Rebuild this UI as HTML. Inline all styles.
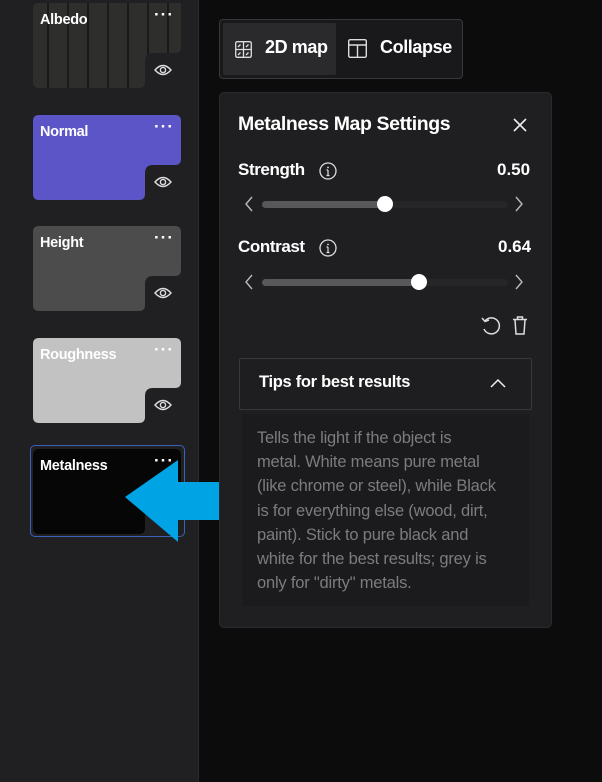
<!DOCTYPE html>
<html><head><style>
*{margin:0;padding:0;box-sizing:border-box}
body{width:602px;height:782px;background:#0c0c0d;font-family:"Liberation Sans",sans-serif;position:relative;overflow:hidden;color:#fff}
.side{position:absolute;left:0;top:0;width:199px;height:782px;background:#202023;border-right:1px solid #2a2a2d}
.card{position:absolute;left:33px;width:148px;height:85px}
.card svg{position:absolute;left:0;top:0}
.card .t{position:absolute;left:7px;top:9px;font-size:14.5px;font-weight:bold;letter-spacing:-0.3px}
.card .d{position:absolute;right:7px;top:2px;font-size:17px;font-weight:bold;letter-spacing:1px}
.card .e{position:absolute;left:121px;top:60px}
.abs{position:absolute}
.b{font-weight:bold}
</style></head><body>
<div class="side"></div>

<div class="card" style="top:3px">
<svg width="148" height="85"><defs><pattern id="st" width="20" height="85" patternUnits="userSpaceOnUse"><rect width="20" height="85" fill="#2e2e2c"/><rect x="14" width="2" height="85" fill="#1a1a19"/></pattern></defs><path d="M6 0H148V44Q148 50 142 50H120Q112 50 112 58V79Q112 85 106 85H6Q0 85 0 79V6Q0 0 6 0Z" fill="url(#st)"/></svg>
<div class="t">Albedo</div><div class="d">···</div>
<svg class="e" width="18" height="14" viewBox="0 0 18 14"><path d="M1 7Q9 -2 17 7Q9 16 1 7Z" fill="none" stroke="#ddd" stroke-width="1.4"/><circle cx="9" cy="7" r="2.6" fill="none" stroke="#ddd" stroke-width="1.4"/></svg>
</div>
<div class="card" style="top:115px">
<svg width="148" height="85"><path d="M6 0H142Q148 0 148 6V44Q148 50 142 50H120Q112 50 112 58V79Q112 85 106 85H6Q0 85 0 79V6Q0 0 6 0Z" fill="#5c55c7"/></svg>
<div class="t">Normal</div><div class="d">···</div>
<svg class="e" width="18" height="14" viewBox="0 0 18 14"><path d="M1 7Q9 -2 17 7Q9 16 1 7Z" fill="none" stroke="#ddd" stroke-width="1.4"/><circle cx="9" cy="7" r="2.6" fill="none" stroke="#ddd" stroke-width="1.4"/></svg>
</div>
<div class="card" style="top:226px">
<svg width="148" height="85"><path d="M6 0H142Q148 0 148 6V44Q148 50 142 50H120Q112 50 112 58V79Q112 85 106 85H6Q0 85 0 79V6Q0 0 6 0Z" fill="#4c4c4c"/></svg>
<div class="t">Height</div><div class="d">···</div>
<svg class="e" width="18" height="14" viewBox="0 0 18 14"><path d="M1 7Q9 -2 17 7Q9 16 1 7Z" fill="none" stroke="#ddd" stroke-width="1.4"/><circle cx="9" cy="7" r="2.6" fill="none" stroke="#ddd" stroke-width="1.4"/></svg>
</div>
<div class="card" style="top:338px">
<svg width="148" height="85"><path d="M6 0H142Q148 0 148 6V44Q148 50 142 50H120Q112 50 112 58V79Q112 85 106 85H6Q0 85 0 79V6Q0 0 6 0Z" fill="#c2c2c2"/></svg>
<div class="t">Roughness</div><div class="d">···</div>
<svg class="e" width="18" height="14" viewBox="0 0 18 14"><path d="M1 7Q9 -2 17 7Q9 16 1 7Z" fill="none" stroke="#ddd" stroke-width="1.4"/><circle cx="9" cy="7" r="2.6" fill="none" stroke="#ddd" stroke-width="1.4"/></svg>
</div>
<div class="abs" style="left:30px;top:445px;width:155px;height:92px;border:1.5px solid #3a62b8;border-radius:5px"></div>
<div class="card" style="top:449px">
<svg width="148" height="85"><path d="M6 0H142Q148 0 148 6V44Q148 50 142 50H120Q112 50 112 58V79Q112 85 106 85H6Q0 85 0 79V6Q0 0 6 0Z" fill="#060606"/></svg>
<div class="t">Metalness</div><div class="d">···</div>
</div>

<svg class="abs" style="left:120px;top:455px" width="125" height="90"><path d="M5 42L58 5V27H118V65H58V87Z" fill="#00a3e3"/></svg>

<div class="abs" style="left:219px;top:19px;width:244px;height:60px;background:#19191b;border:1px solid #38383a;border-radius:4px"></div>
<div class="abs" style="left:223px;top:23px;width:113px;height:52px;background:#2a2a2c;border-radius:2px"></div>
<svg class="abs" style="left:235px;top:41px" width="17" height="17" viewBox="0 0 17 17" fill="none" stroke="#ddd" stroke-width="1.3"><rect x="0.7" y="0.7" width="15.6" height="15.6" rx="1.5"/><path d="M8.5 1V16M1 8.5H16M3 6L5.5 3.5M11 6L13.5 3.5M3 14L5.5 11.5M11 14L13.5 11.5"/></svg>
<div class="abs b" style="left:265px;top:37px;font-size:18px;letter-spacing:-0.4px">2D map</div>
<svg class="abs" style="left:348px;top:39px" width="19" height="19" viewBox="0 0 19 19" fill="none" stroke="#ddd" stroke-width="1.4"><rect x="0.7" y="0.7" width="17.6" height="17.6" rx="1.5"/><path d="M1 6H18M9.5 6V18"/></svg>
<div class="abs b" style="left:380px;top:37px;font-size:18px;letter-spacing:-0.4px">Collapse</div>

<div class="abs" style="left:219px;top:92px;width:333px;height:536px;background:#1f1f21;border:1px solid #2a2a2c;border-radius:5px"></div>
<div class="abs b" style="left:238px;top:113px;font-size:19.5px;letter-spacing:-0.4px">Metalness Map Settings</div>
<svg class="abs" style="left:513px;top:118px" width="14" height="14"><path d="M1 1L13 13M13 1L1 13" stroke="#eee" stroke-width="1.6"/></svg>

<div class="abs b" style="left:238px;top:160px;font-size:17px;letter-spacing:-0.4px">Strength</div>
<svg class="abs" style="left:319px;top:162px" width="18" height="18"><circle cx="9" cy="9" r="8" fill="none" stroke="#ddd" stroke-width="1.3"/><path d="M9 8V13.5M7.5 8H9M7.5 13.5H10.5" stroke="#ddd" stroke-width="1.2"/><circle cx="9" cy="5.5" r="0.9" fill="#ddd"/></svg>
<div class="abs b" style="left:497px;top:160px;font-size:17px">0.50</div>
<svg class="abs" style="left:244px;top:196px" width="10" height="16"><path d="M8 1L2 8L8 15" fill="none" stroke="#bbb" stroke-width="1.4"/></svg>
<div class="abs" style="left:262px;top:201px;width:246px;height:7px;background:#262628;border-radius:4px"></div>
<div class="abs" style="left:262px;top:201px;width:123px;height:7px;background:#58585a;border-radius:4px"></div>
<div class="abs" style="left:377px;top:196px;width:16px;height:16px;background:#fff;border-radius:50%"></div>
<svg class="abs" style="left:514px;top:196px" width="10" height="16"><path d="M2 1L8 8L2 15" fill="none" stroke="#bbb" stroke-width="1.4"/></svg>

<div class="abs b" style="left:238px;top:237px;font-size:17px;letter-spacing:-0.4px">Contrast</div>
<svg class="abs" style="left:319px;top:239px" width="18" height="18"><circle cx="9" cy="9" r="8" fill="none" stroke="#ddd" stroke-width="1.3"/><path d="M9 8V13.5M7.5 8H9M7.5 13.5H10.5" stroke="#ddd" stroke-width="1.2"/><circle cx="9" cy="5.5" r="0.9" fill="#ddd"/></svg>
<div class="abs b" style="left:498px;top:237px;font-size:17px">0.64</div>
<svg class="abs" style="left:244px;top:274px" width="10" height="16"><path d="M8 1L2 8L8 15" fill="none" stroke="#bbb" stroke-width="1.4"/></svg>
<div class="abs" style="left:262px;top:279px;width:246px;height:7px;background:#262628;border-radius:4px"></div>
<div class="abs" style="left:262px;top:279px;width:157px;height:7px;background:#58585a;border-radius:4px"></div>
<div class="abs" style="left:411px;top:274px;width:16px;height:16px;background:#fff;border-radius:50%"></div>
<svg class="abs" style="left:514px;top:274px" width="10" height="16"><path d="M2 1L8 8L2 15" fill="none" stroke="#bbb" stroke-width="1.4"/></svg>

<svg class="abs" style="left:480px;top:315px" width="22" height="22" viewBox="0 0 22 22" fill="none" stroke="#ddd" stroke-width="1.5"><path d="M5 6A8 8 0 1 1 4 14"/><path d="M2 3L5 6.5L9 5"/></svg>
<svg class="abs" style="left:512px;top:316px" width="16" height="19" viewBox="0 0 16 19" fill="none" stroke="#ddd" stroke-width="1.5"><path d="M1 3.5H15M5.5 3.5V1H10.5V3.5M3 3.5L4 18H12L13 3.5"/></svg>

<div class="abs" style="left:239px;top:358px;width:293px;height:52px;border:1px solid #38383a;border-radius:2px;background:#1e1e20"></div>
<div class="abs b" style="left:259px;top:373px;font-size:16.5px;letter-spacing:-0.3px">Tips for best results</div>
<svg class="abs" style="left:490px;top:378px" width="16" height="10"><path d="M1 9L8 2L15 9" fill="none" stroke="#eee" stroke-width="1.5"/></svg>
<div class="abs" style="left:242px;top:414px;width:287px;height:192px;background:#1b1b1d"></div>
<div class="abs" style="left:257px;top:426px;width:275px;font-size:16.5px;line-height:24.2px;color:#7c7c7e;letter-spacing:-0.2px;white-space:nowrap">Tells the light if the object is<br>metal. White means pure metal<br>(like chrome or steel), while Black<br>is for everything else (wood, dirt,<br>paint). Stick to pure black and<br>white for the best results; grey is<br>only for "dirty" metals.</div>
</body></html>
